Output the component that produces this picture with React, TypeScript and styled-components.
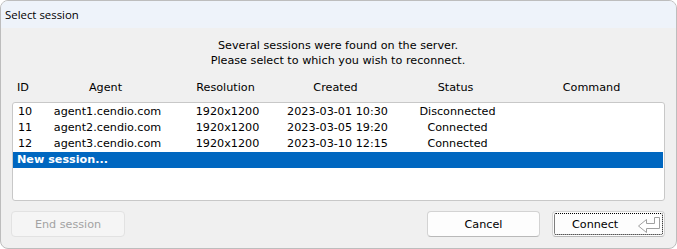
import * as React from 'react';
import styled, { createGlobalStyle } from 'styled-components';

const GlobalStyle = createGlobalStyle`
  html, body {
    margin: 0;
    padding: 0;
    background: #ffffff;
  }
`;

const Window = styled.div`
  width: 677px;
  height: 249px;
  box-sizing: border-box;
  border: 1px solid #bdbdbd;
  border-radius: 8px;
  overflow: hidden;
  display: flex;
  flex-direction: column;
  background: #f0f0f0;
  font-family: "DejaVu Sans", sans-serif;
  font-size: 11.2px;
  color: #000;
`;

const TitleBar = styled.div`
  height: 27px;
  flex: none;
  display: flex;
  align-items: center;
  padding-left: 4px;
  background: #eef3fa;
  font-family: "Open Sans", sans-serif;
  font-size: 11.4px;
`;

const Body = styled.div`
  flex: 1;
  display: flex;
  flex-direction: column;
  padding: 0 11px 0 10px;
`;

const Message = styled.div`
  margin-top: 9.5px;
  line-height: 15px;
  text-align: center;
`;

const columns = '27px 135px 105px 115px 125px 1fr';

const HeaderRow = styled.div`
  margin-top: 12.5px;
  display: grid;
  grid-template-columns: ${columns};
  height: 16px;
  line-height: 16px;
`;

const HeaderCell = styled.div<{ $left?: boolean }>`
  text-align: ${p => (p.$left ? 'left' : 'center')};
  padding-left: ${p => (p.$left ? '6px' : '0')};
  white-space: nowrap;
`;

const ListBox = styled.div`
  margin: 6px 0 0 1px;
  height: 99px;
  box-sizing: border-box;
  border: 1px solid #c8c8c8;
  border-radius: 3px;
  background: #ffffff;
  padding-top: 1px;
  display: flex;
  flex-direction: column;
`;

const Row = styled.div`
  display: grid;
  grid-template-columns: ${columns};
  height: 16px;
  line-height: 16px;
`;

const Cell = styled.div<{ $left?: boolean }>`
  text-align: ${p => (p.$left ? 'left' : 'center')};
  padding-left: ${p => (p.$left ? '5px' : '0')};
  white-space: nowrap;
`;

const SelectedRow = styled.div`
  height: 16px;
  line-height: 16px;
  margin-right: 1px;
  padding-left: 4px;
  background: #0067c0;
  color: #ffffff;
  font-weight: bold;
`;

const Footer = styled.div`
  margin-top: 10px;
  display: flex;
  align-items: center;
  gap: 12px;
`;

const Spacer = styled.div`
  flex: 1;
`;

const Button = styled.button<{ $width?: number }>`
  width: ${p => p.$width ?? 114}px;
  height: 26px;
  box-sizing: border-box;
  padding: 0;
  border: 1px solid #d3d3d3;
  border-bottom-color: #b9b9b9;
  border-radius: 4px;
  background: #fdfdfd;
  font: inherit;
  color: #000;
  display: flex;
  align-items: center;
  justify-content: center;

  &:disabled {
    color: #a3a3a3;
    background: #f5f5f5;
    border-color: #e2e2e2;
  }
`;

const DefaultButton = styled(Button)`
  justify-content: flex-start;
  padding: 0 3px 0 19px;
  outline: 1px dotted #000;
  outline-offset: -3px;
`;

const EnterIcon = styled.svg`
  margin-left: auto;
  flex: none;
`;

const sessions = [
  { id: '10', agent: 'agent1.cendio.com', res: '1920x1200', created: '2023-03-01 10:30', status: 'Disconnected' },
  { id: '11', agent: 'agent2.cendio.com', res: '1920x1200', created: '2023-03-05 19:20', status: 'Connected' },
  { id: '12', agent: 'agent3.cendio.com', res: '1920x1200', created: '2023-03-10 12:15', status: 'Connected' },
];

export default function App() {
  return (
    <>
      <GlobalStyle />
      <Window>
        <TitleBar>Select session</TitleBar>
        <Body>
          <Message>
            Several sessions were found on the server.
            <br />
            Please select to which you wish to reconnect.
          </Message>
          <HeaderRow>
            <HeaderCell $left>ID</HeaderCell>
            <HeaderCell>Agent</HeaderCell>
            <HeaderCell>Resolution</HeaderCell>
            <HeaderCell>Created</HeaderCell>
            <HeaderCell>Status</HeaderCell>
            <HeaderCell>Command</HeaderCell>
          </HeaderRow>
          <ListBox>
            {sessions.map(s => (
              <Row key={s.id}>
                <Cell $left>{s.id}</Cell>
                <Cell>{s.agent}</Cell>
                <Cell>{s.res}</Cell>
                <Cell>{s.created}</Cell>
                <Cell>{s.status}</Cell>
                <Cell />
              </Row>
            ))}
            <SelectedRow>New session...</SelectedRow>
          </ListBox>
          <Footer>
            <Button disabled>End session</Button>
            <Spacer />
            <Button $width={113}>Cancel</Button>
            <DefaultButton $width={113}>
              Connect
              <EnterIcon width="23" height="17" viewBox="0 0 23 17">
                <polygon
                  points="0.5,10 8.5,3.5 8.5,7.5 16.5,7.5 16.5,1.5 21.5,1.5 21.5,12.5 8.5,12.5 8.5,16.5"
                  fill="#ffffff"
                  stroke="#a0a0a0"
                  strokeWidth="1"
                />
              </EnterIcon>
            </DefaultButton>
          </Footer>
        </Body>
      </Window>
    </>
  );
}
